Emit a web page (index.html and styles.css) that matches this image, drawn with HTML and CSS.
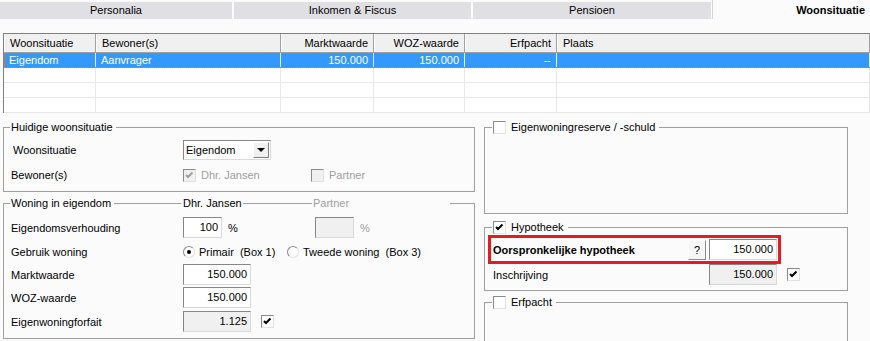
FILE: index.html
```html
<!DOCTYPE html>
<html lang="nl">
  <head>
    <meta charset="UTF-8" />
    <meta name="viewport" content="width=device-width, initial-scale=1.0" />
    <title>Woonsituatie</title>
    <link rel="stylesheet" href="styles.css">
  </head>
  <body>
    <div class="tabs">
      <div class="tab tab-first">Personalia</div>
      <div class="tab tab-second">Inkomen &amp; Fiscus</div>
      <div class="tab tab-third">Pensioen</div>
      <div class="tab tab-active">Woonsituatie</div>
    </div>

    <div class="grid">
      <div class="grid-row grid-head">
        <div class="cell">Woonsituatie</div>
        <div class="cell">Bewoner(s)</div>
        <div class="cell num">Marktwaarde</div>
        <div class="cell num">WOZ-waarde</div>
        <div class="cell num">Erfpacht</div>
        <div class="cell">Plaats</div>
      </div>
      <div class="grid-row selected">
        <div class="cell">Eigendom</div>
        <div class="cell">Aanvrager</div>
        <div class="cell num">150.000</div>
        <div class="cell num">150.000</div>
        <div class="cell num">--</div>
        <div class="cell"></div>
      </div>
      <div class="grid-row">
        <div class="cell"></div><div class="cell"></div><div class="cell"></div>
        <div class="cell"></div><div class="cell"></div><div class="cell"></div>
      </div>
      <div class="grid-row">
        <div class="cell"></div><div class="cell"></div><div class="cell"></div>
        <div class="cell"></div><div class="cell"></div><div class="cell"></div>
      </div>
      <div class="grid-row">
        <div class="cell"></div><div class="cell"></div><div class="cell"></div>
        <div class="cell"></div><div class="cell"></div><div class="cell"></div>
      </div>
    </div>

    <div class="panels">
      <div class="col-left">
        <fieldset class="group group-current">
          <legend>Huidige woonsituatie</legend>
          <div class="row">
            <span class="label label-indent">Woonsituatie</span>
            <div class="select">
              <span class="select-value">Eigendom</span>
              <span class="select-btn"><span class="arrow"></span></span>
            </div>
          </div>
          <div class="row row-check">
            <span class="label">Bewoner(s)</span>
            <span class="opt opt-first muted">
              <span class="chk chk-off">
                <svg viewBox="0 0 11 11"><polyline points="2,5 4,7 8.5,2.5" fill="none" stroke="#a0a0a0" stroke-width="2" /></svg>
              </span>
              Dhr. Jansen
            </span>
            <span class="opt muted"><span class="chk chk-off"></span>Partner</span>
          </div>
        </fieldset>

        <fieldset class="group group-owned">
          <legend class="legend-cols">
            <span class="lg-col lg-first">Woning in eigendom<span class="lg-line"></span></span>
            <span class="lg-col lg-second">Dhr. Jansen<span class="lg-line lg-line-tight"></span></span>
            <span class="lg-col muted">Partner</span>
          </legend>
          <div class="row">
            <span class="label">Eigendomsverhouding</span>
            <div class="col-dhr">
              <span class="field field-pct">100</span>
              <span class="unit">%</span>
            </div>
            <span class="field field-pct field-off"></span>
            <span class="unit muted">%</span>
          </div>
          <div class="row row-gap3">
            <span class="label">Gebruik woning</span>
            <span class="opt opt-radio opt-primair"><span class="radio radio-on"></span>Primair&nbsp; (Box 1)</span>
            <span class="opt opt-radio"><span class="radio"></span>Tweede woning&nbsp; (Box 3)</span>
          </div>
          <div class="row row-gap2">
            <span class="label">Marktwaarde</span>
            <span class="field field-value">150.000</span>
          </div>
          <div class="row row-gap2">
            <span class="label">WOZ-waarde</span>
            <span class="field field-value">150.000</span>
          </div>
          <div class="row row-gap3">
            <span class="label">Eigenwoningforfait</span>
            <span class="field field-value field-off">1.125</span>
            <span class="chk chk-after">
              <svg viewBox="0 0 11 11"><polyline points="2,5 4,7 8.5,2.5" fill="none" stroke="#000" stroke-width="2" /></svg>
            </span>
          </div>
        </fieldset>
      </div>

      <div class="col-right">
        <fieldset class="group">
          <legend class="legend-check"><span class="chk"></span>Eigenwoningreserve / -schuld</legend>
          <div class="group-empty"></div>
        </fieldset>

        <fieldset class="group group-mortgage">
          <legend class="legend-check">
            <span class="chk">
              <svg viewBox="0 0 11 11"><polyline points="2,5 4,7 8.5,2.5" fill="none" stroke="#000" stroke-width="2" /></svg>
            </span>
            Hypotheek
          </legend>
          <div class="highlight">
            <span class="highlight-label">Oorspronkelijke hypotheek</span>
            <span class="help">?</span>
            <span class="field field-value">150.000</span>
          </div>
          <div class="row row-right">
            <span class="label label-wide">Inschrijving</span>
            <span class="field field-value field-off">150.000</span>
            <span class="chk chk-after">
              <svg viewBox="0 0 11 11"><polyline points="2,5 4,7 8.5,2.5" fill="none" stroke="#000" stroke-width="2" /></svg>
            </span>
          </div>
        </fieldset>

        <fieldset class="group group-lease">
          <legend class="legend-check"><span class="chk"></span>Erfpacht</legend>
          <div class="group-empty group-empty-tall"></div>
        </fieldset>
      </div>
    </div>
  </body>
</html>
```

FILE: styles.css
```css
* {
  margin: 0;
  padding: 0;
  box-sizing: border-box;
}

body {
  font-family: "Liberation Sans", Arial, sans-serif;
  font-size: 11px;
  color: #000;
  background-color: #fbfbfb;
  height: 341px;
  overflow: hidden;
}

.muted {
  color: #a0a0a0;
}

/* tabs */

.tabs {
  display: flex;
  padding-top: 2px;
  height: 19px;
}

.tab {
  height: 17px;
  line-height: 17px;
  text-align: center;
  background-color: #e0dfe4;
  margin-right: 2px;
}

.tab-first {
  width: 232px;
}

.tab-second {
  width: 237px;
}

.tab-third {
  width: 238px;
  margin-right: 1px;
}

.tab-active {
  flex: 1;
  height: 19px;
  margin-top: -2px;
  padding-top: 2px;
  margin-right: 0;
  background: none;
  border-left: 1px solid #d6d6d6;
  text-align: right;
  padding-right: 5px;
  font-weight: bold;
}

/* grid */

.grid {
  margin: 14px 0 0 3px;
  border-top: 1px solid #808080;
  border-left: 1px solid #808080;
  background-color: #fff;
}

.grid-row {
  display: grid;
  grid-template-columns: 92px 185px 93px 91px 92px 1fr;
  height: 15px;
  border-bottom: 1px solid #e8e8e8;
}

.grid-head {
  height: 19px;
  background-color: #f0f0f0;
  border-bottom: 1px solid #a0a0a0;
}

.cell {
  padding: 0 5px;
  border-right: 1px solid #e8e8e8;
  line-height: 14px;
  white-space: nowrap;
  overflow: hidden;
}

.grid-head .cell {
  border-left: 1px solid #fff;
  border-right: 1px solid #a0a0a0;
  line-height: 18px;
}

.num {
  text-align: right;
}

.selected {
  background-color: #3399ff;
  color: #fff;
  border-bottom: 1px dotted #d8843c;
}

.selected .cell {
  border-right-color: #e6f1ff;
}

.selected .cell:first-child {
  border-left: 1px dotted #d8843c;
  padding-left: 4px;
}

/* panels */

.panels {
  display: flex;
  margin-top: 8px;
  padding-left: 3px;
}

.col-left {
  width: 472px;
}

.col-right {
  width: 364px;
  margin-left: 9px;
}

.group {
  border: 1px solid #a0a0a0;
  min-width: 0;
}

.group legend {
  margin-left: 6px;
  padding: 0 3px 0 1px;
  height: 13px;
  line-height: 13px;
}

.group-current {
  padding: 5px 0 7px;
}

.group-owned {
  margin-top: 5px;
  padding: 7px 0 6px;
}

.group-mortgage {
  margin-top: 7px;
  padding: 1px 0 5px;
}

.group-lease {
  margin-top: 5px;
}

.group-empty {
  height: 79px;
}

.group-empty-tall {
  height: 60px;
}

.legend-cols {
  display: flex;
  width: 440px;
}

.lg-col {
  display: flex;
  align-items: center;
}

.lg-first {
  width: 172px;
}

.lg-second {
  width: 130px;
}

.lg-line {
  flex: 1;
  height: 0;
  border-top: 1px solid #a0a0a0;
  margin: 0 2px 0 3px;
}

.lg-line-tight {
  margin: 0 1px 0 1px;
}

.group .legend-check {
  display: flex;
  align-items: center;
  margin-left: 7px;
  padding: 0 4px 0 1px;
  gap: 5px;
}

/* rows */

.row {
  display: flex;
  align-items: center;
  height: 21px;
  padding-left: 7px;
}

.row-check {
  height: 18px;
  margin-top: 6px;
}

.row-gap2 {
  margin-top: 2px;
}

.row-gap3 {
  margin-top: 3px;
}

.row-right {
  padding-left: 8px;
}

.label {
  width: 172px;
  flex: none;
}

.label-indent {
  padding-left: 2px;
}

.label-wide {
  width: 216px;
}

.col-dhr {
  display: flex;
  align-items: center;
  width: 132px;
}

.unit {
  margin-left: 6px;
}

/* controls */

.field {
  display: block;
  height: 21px;
  border: 1px solid;
  border-color: #868686 #dadada #dadada #868686;
  background-color: #fff;
  text-align: right;
  padding-right: 3px;
  line-height: 19px;
}

.field-pct {
  width: 39px;
}

.field-value {
  width: 68px;
}

.field-off {
  background-color: #f0f0f0;
}

.select {
  display: flex;
  align-items: center;
  width: 88px;
  height: 20px;
  border: 1px solid;
  border-color: #868686 #dadada #dadada #868686;
  background-color: #fff;
}

.select-value {
  flex: 1;
  padding-left: 2px;
}

.select-btn {
  display: flex;
  align-items: center;
  justify-content: center;
  width: 16px;
  height: 16px;
  margin-right: 1px;
  background-color: #f0f0f0;
  border: 1px solid;
  border-color: #fff #808080 #808080 #fff;
}

.arrow {
  width: 0;
  height: 0;
  border-left: 4px solid transparent;
  border-right: 4px solid transparent;
  border-top: 4px solid #000;
}

.opt {
  display: inline-flex;
  align-items: center;
  gap: 5px;
}

.opt-first {
  width: 128px;
}

.opt-radio {
  gap: 4px;
}

.opt-primair {
  width: 104px;
}

.chk {
  display: inline-flex;
  flex: none;
  width: 13px;
  height: 13px;
  border: 1px solid;
  border-color: #8a8a8a #e2e2e2 #e2e2e2 #8a8a8a;
  background-color: #fff;
}

.chk svg {
  width: 11px;
  height: 11px;
}

.chk-off {
  background-color: #f0f0f0;
}

.chk-after {
  margin-left: 10px;
}

.radio {
  display: inline-flex;
  align-items: center;
  justify-content: center;
  flex: none;
  width: 12px;
  height: 12px;
  border-radius: 50%;
  border: 1px solid;
  border-color: #8a8a8a #e2e2e2 #e2e2e2 #8a8a8a;
  background-color: #fff;
}

.radio-on::after {
  content: "";
  width: 4px;
  height: 4px;
  border-radius: 50%;
  background-color: #000;
}

/* hypotheek highlight */

.highlight {
  display: flex;
  align-items: center;
  width: 293px;
  height: 29px;
  margin-left: 3px;
  border: 3px solid #e31b23;
  padding: 1px 1px 1px 2px;
}

.highlight-label {
  flex: 1;
  font-weight: bold;
}

.help {
  width: 18px;
  height: 20px;
  margin-right: 3px;
  border: 1px solid;
  border-color: #fff #8a8a8a #8a8a8a #fff;
  background-color: #f6f6f6;
  text-align: center;
  line-height: 18px;
}
```
